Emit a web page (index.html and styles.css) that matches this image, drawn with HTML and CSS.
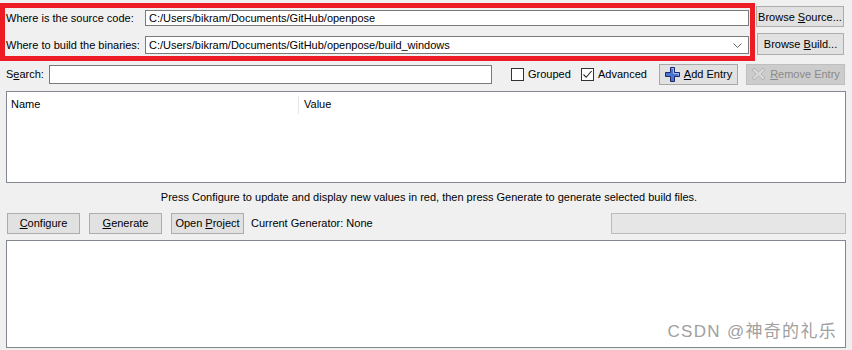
FILE: index.html
```html
<!DOCTYPE html>
<html>
<head>
<meta charset="utf-8">
<link rel="stylesheet" href="styles.css">
</head>
<body>
<div class="top">
  <div class="annot">
    <div class="lbl l1">Where is the source code:</div>
    <div class="field f1">C:/Users/bikram/Documents/GitHub/openpose</div>
    <div class="lbl l2">Where to build the binaries:</div>
    <div class="field combo f2"><span>C:/Users/bikram/Documents/GitHub/openpose/build_windows</span>
      <svg class="chev" width="9" height="5" viewBox="0 0 9 5"><path d="M0.5 0.5 L4.5 4.5 L8.5 0.5" fill="none" stroke="#606060" stroke-width="1"/></svg>
    </div>
  </div>
  <div class="browse">
    <div class="btn bs"><span>Browse <u>S</u>ource...</span></div>
    <div class="btn bb"><span>Browse <u>B</u>uild...</span></div>
  </div>
</div>
<div class="search-row">
  <span class="slbl">S<u>e</u>arch:</span>
  <div class="field search"></div>
  <span class="cb"></span><span class="cbl grp">Grouped</span>
  <span class="cb checked"><svg width="11" height="11" viewBox="0 0 11 11"><path d="M1.5 5.5 L4.2 8.3 L9.6 2" fill="none" stroke="#222" stroke-width="1.1"/></svg></span><span class="cbl adv">Advanced</span>
  <div class="btn add"><svg width="15" height="15" viewBox="0 0 15 15"><path d="M5.5 0.5 H9.5 V5.5 H14.5 V9.5 H9.5 V14.5 H5.5 V9.5 H0.5 V5.5 H5.5 Z" fill="#4a74d0" stroke="#1c2a6b" stroke-width="1"/><path d="M6.5 1.5 H8.5 V6.5 H13.5 V8.5" fill="none" stroke="#9fc0f5" stroke-width="1"/></svg><span><u>A</u>dd Entry</span></div>
  <div class="btn rem"><svg width="15" height="14" viewBox="0 0 15 14"><path d="M1 3 L3 1 L7.5 5 L12 1 L14 3 L10 7 L14 11 L12 13 L7.5 9 L3 13 L1 11 L5 7 Z" fill="#d8d8d8" stroke="#b4b4b4" stroke-width="1"/></svg><span><u>R</u>emove Entry</span></div>
</div>
<div class="table">
  <div class="thead">
    <div class="th name">Name</div>
    <div class="th value">Value</div>
  </div>
</div>
<div class="msg">Press Configure to update and display new values in red, then press Generate to generate selected build files.</div>
<div class="actions">
  <div class="btn act cfg"><span><u>C</u>onfigure</span></div>
  <div class="btn act gen"><span><u>G</u>enerate</span></div>
  <div class="btn act open"><span>Open <u>P</u>roject</span></div>
  <span class="gen-lbl">Current Generator: None</span>
  <div class="progress"></div>
</div>
<div class="output">
  <div class="wm">CSDN @神奇的礼乐</div>
</div>
</body>
</html>
```
FILE: styles.css
```css
* { box-sizing: border-box; }
html, body { margin: 0; padding: 0; }
body {
  width: 852px;
  height: 350px;
  background: #f0f0f0;
  font-family: "Liberation Sans", "Noto Sans CJK SC", sans-serif;
  font-size: 11px;
  color: #000;
  overflow: hidden;
}
u { text-decoration: underline; text-underline-offset: 1px; }

.top {
  display: flex;
  padding-top: 3px;
  height: 61px;
}
.annot {
  width: 755px;
  height: 58px;
  border: 5px solid #ed1c24;
  display: grid;
  grid-template-columns: 139px 1fr;
  grid-template-rows: 17px 18px;
  row-gap: 10px;
  padding: 1px 1px 0 1px;
  align-items: center;
}
.lbl { white-space: nowrap; }
.field {
  background: #fff;
  border: 1px solid #7a7a7a;
  height: 16px;
  line-height: 14px;
  padding-left: 3px;
  white-space: nowrap;
  overflow: hidden;
}
.combo {
  height: 18px;
  line-height: 16px;
  display: flex;
  justify-content: space-between;
  align-items: center;
  padding-right: 6px;
}
.chev { display: block; }

.browse {
  display: flex;
  flex-direction: column;
  align-items: flex-start;
  padding-left: 1px;
}
.btn {
  background: #e1e1e1;
  border: 1px solid #adadad;
  display: flex;
  align-items: center;
  justify-content: center;
  white-space: nowrap;
}
.bs { width: 88px; height: 21px; margin-top: 3px; }
.bb { width: 87px; height: 22px; margin-top: 6px; margin-left: 1px; }

.search-row {
  display: flex;
  align-items: center;
  height: 22px;
  margin-top: 2px;
  padding-left: 6px;
}
.slbl { width: 43px; }
.search { width: 443px; height: 19px; }
.cb {
  flex: none;
  width: 13px;
  height: 13px;
  border: 1px solid #333;
  background: #fff;
  margin-left: 19px;
  display: flex;
  align-items: center;
  justify-content: center;
}
.cb.checked { margin-left: 0; }
.cbl { margin-left: 4px; }
.grp { width: 53px; }
.adv { width: 60px; }
.add {
  width: 79px;
  height: 21px;
  gap: 4px;
  border-color: #a8a8a8;
  margin-left: 1px;
}
.rem {
  width: 99px;
  height: 21px;
  margin-left: 8px;
  gap: 4px;
  background: #cccccc;
  border-color: #bfbfbf;
  color: #8a8a8a;
}

.table {
  margin: 6px 6px 0 6px;
  height: 92px;
  border: 1px solid #828790;
  background: #fff;
}
.thead {
  display: flex;
  height: 22px;
  padding-top: 4px;
}
.th { padding-left: 4px; line-height: 16px; }
.name { width: 292px; border-right: 1px solid #e5e5e5; }
.value { padding-left: 5px; }

.msg {
  text-align: center;
  margin-top: 6px;
  height: 16px;
  line-height: 16px;
  padding-left: 6px;
}

.actions {
  display: flex;
  align-items: center;
  margin-top: 7px;
  padding-left: 7px;
  height: 22px;
}
.act { width: 73px; height: 21px; margin-right: 9px; }
.open { margin-right: 7px; }
.gen-lbl { flex: 1; }
.progress {
  width: 235px;
  height: 21px;
  border: 1px solid #bcbcbc;
  background: #e6e6e6;
  margin-right: 6px;
}

.output {
  margin: 6px 6px 0 6px;
  height: 108px;
  border: 1px solid #828790;
  background: #fff;
  display: flex;
  justify-content: flex-end;
  align-items: flex-end;
}
.wm {
  font-family: "Liberation Sans", "Noto Sans CJK SC", sans-serif;
  font-size: 17px;
  letter-spacing: 1.3px;
  color: #a0a0a0;
  padding: 0 8px 5px 0;
}
```
